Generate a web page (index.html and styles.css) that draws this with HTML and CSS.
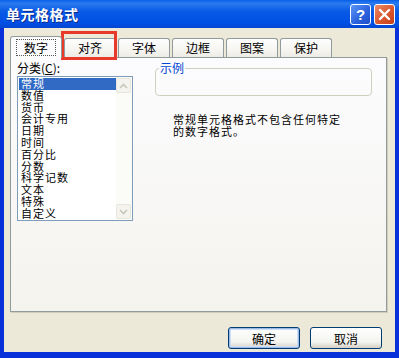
FILE: index.html
```html
<!DOCTYPE html>
<html>
<head>
	<meta charset="utf-8">
	<title>单元格格式</title>
	<link rel="stylesheet" href="styles.css">
</head>
<body>
	<div class="window">
		<div class="titlebar">
			<span class="title">单元格格式</span>
			<span class="tbtn help">?</span>
			<span class="tbtn close">
				<svg width="13" height="13" viewBox="0 0 13 13"><path d="M2 2L11 11M11 2L2 11" stroke="#fff" stroke-width="2.4" stroke-linecap="round"/></svg>
			</span>
		</div>
		<div class="client">
			<div class="tabs">
				<div class="tab active"><span class="focus">数字</span></div>
				<div class="tab marked">对齐</div>
				<div class="tab">字体</div>
				<div class="tab">边框</div>
				<div class="tab">图案</div>
				<div class="tab">保护</div>
			</div>
			<div class="panel">
				<div class="leftcol">
					<div class="caption">分类(<u>C</u>):</div>
					<div class="listbox">
						<div class="items">
							<div class="item sel">常规</div>
							<div class="item">数值</div>
							<div class="item">货币</div>
							<div class="item">会计专用</div>
							<div class="item">日期</div>
							<div class="item">时间</div>
							<div class="item">百分比</div>
							<div class="item">分数</div>
							<div class="item">科学记数</div>
							<div class="item">文本</div>
							<div class="item">特殊</div>
							<div class="item">自定义</div>
						</div>
						<div class="scrollbar">
							<div class="sbtn"><svg width="9" height="6" viewBox="0 0 9 6"><path d="M1 5L4.5 1.5L8 5" fill="none" stroke="#c9c7ba" stroke-width="1.6"/></svg></div>
							<div class="track"></div>
							<div class="sbtn"><svg width="9" height="6" viewBox="0 0 9 6"><path d="M1 1L4.5 4.5L8 1" fill="none" stroke="#c9c7ba" stroke-width="1.6"/></svg></div>
						</div>
					</div>
				</div>
				<div class="rightcol">
					<fieldset class="sample">
						<legend>示例</legend>
					</fieldset>
					<p class="desc">常规单元格格式不包含任何特定<br>的数字格式。</p>
				</div>
			</div>
			<div class="buttons">
				<button class="btn default">确定</button>
				<button class="btn">取消</button>
			</div>
		</div>
	</div>
</body>
</html>
```

FILE: styles.css
```css
html, body{
	margin: 0;
	padding: 0;
}
body{
	width: 399px;
	height: 358px;
	overflow: hidden;
	font: 12px/12px "Noto Sans CJK SC", "DejaVu Sans", sans-serif;
	color: #000;
	background-color: #0831d9;
}
.window{
	width: 399px;
	height: 358px;
	display: flex;
	flex-direction: column;
	background-color: #0831d9;
}
.titlebar{
	height: 28px;
	display: flex;
	align-items: center;
	padding: 0 4px 0 6px;
	background: linear-gradient(#0a5fe8 0%, #2a7bf0 12%, #0a5ae6 40%, #0050e6 80%, #0646d2 100%);
}
.title{
	flex: 1;
	color: #fff;
	font-size: 14px;
	font-weight: bold;
	letter-spacing: 0.5px;
	text-shadow: 1px 1px 0 #0a2a8a;
}
.tbtn{
	width: 19px;
	height: 19px;
	border: 1px solid #fff;
	border-radius: 3px;
	display: flex;
	align-items: center;
	justify-content: center;
	color: #fff;
	font: bold 15px "Liberation Sans", sans-serif;
}
.help{
	margin-right: 3px;
	background: linear-gradient(135deg, #5c95f8, #2a60dd 60%, #1f4fc8);
}
.close{
	background: linear-gradient(135deg, #ec8a66, #d9532b 60%, #c3401a);
}
.client{
	flex: 1;
	margin: 0 4px 6px 4px;
	background-color: #ece9d8;
	display: flex;
	flex-direction: column;
	padding: 7px 8px 0 6px;
}
.tabs{
	display: flex;
	align-items: flex-end;
	height: 22px;
	gap: 2px;
}
.tab{
	position: relative;
	width: 50px;
	height: 18px;
	border: 1px solid #919b9c;
	border-bottom: none;
	border-radius: 3px 3px 0 0;
	background: linear-gradient(#fefefe, #f4f3ee 70%, #ecebe4);
	display: flex;
	align-items: center;
	justify-content: center;
	font-size: 12px;
}
.tab.active{
	height: 21px;
	margin-bottom: -1px;
	background: #fcfcfe;
	z-index: 1;
}
.focus{
	border: 1px dotted #555;
	padding: 1px 7px;
	line-height: 13px;
}
.tab.marked::after{
	content: "";
	position: absolute;
	left: -4px;
	top: -8px;
	width: 50px;
	height: 23px;
	border: 3px solid #e8392a;
}
.panel{
	box-sizing: border-box;
	height: 255px;
	border: 1px solid #919b9c;
	background: linear-gradient(#fcfcfe, #f4f3ee);
	display: flex;
	padding: 4px 0 0 6px;
	box-shadow: 1px 1px 0 #d0cdbd;
}
.leftcol{
	width: 117px;
}
.caption{
	height: 12px;
	line-height: 12px;
	margin-bottom: 2px;
}
.caption u{
	text-decoration: underline;
}
.listbox{
	width: 114px;
	height: 143px;
	border: 1px solid #7f9db9;
	background: #fff;
	display: flex;
}
.items{
	flex: 1;
	padding: 1px 0 0 1px;
}
.item{
	height: 11.8px;
	line-height: 11.8px;
	font-size: 11px;
	letter-spacing: 1px;
	padding-left: 2px;
}
.item.sel{
	background: #316ac5;
	color: #fff;
}
.scrollbar{
	width: 15px;
	display: flex;
	flex-direction: column;
	background: #fbfbf8;
	padding: 1px 1px 1px 0;
}
.sbtn{
	height: 15px;
	border: 1px solid #e8e6dc;
	border-radius: 2px;
	background: #f4f3ee;
	display: flex;
	align-items: center;
	justify-content: center;
	box-sizing: border-box;
}
.track{
	flex: 1;
}
.rightcol{
	flex: 1;
	padding-left: 21px;
	padding-right: 14px;
}
.sample{
	margin: 0;
	padding: 0;
	height: 34px;
	border: 1px solid #d0d0bf;
	border-radius: 4px;
	box-sizing: border-box;
}
.sample legend{
	padding: 0 1px;
	margin-left: 3px;
	color: #0046d5;
	font-size: 12px;
	line-height: 12px;
}
.desc{
	margin: 17px 0 0 18px;
	font-size: 11px;
	letter-spacing: 1px;
	line-height: 12px;
}
.buttons{
	display: flex;
	justify-content: flex-end;
	gap: 10px;
	padding-top: 15px;
	padding-right: 5px;
}
.btn{
	width: 72px;
	height: 22px;
	border: 1px solid #003c74;
	border-radius: 3px;
	background: linear-gradient(#ffffff, #f3f3ef 70%, #d6d0c5);
	font: 12px "Noto Sans CJK SC", sans-serif;
	color: #000;
	padding: 0;
}
.btn.default{
	box-shadow: inset 0 0 0 1px #9dbae7, inset 0 0 0 2px #cee0f6;
}
```
